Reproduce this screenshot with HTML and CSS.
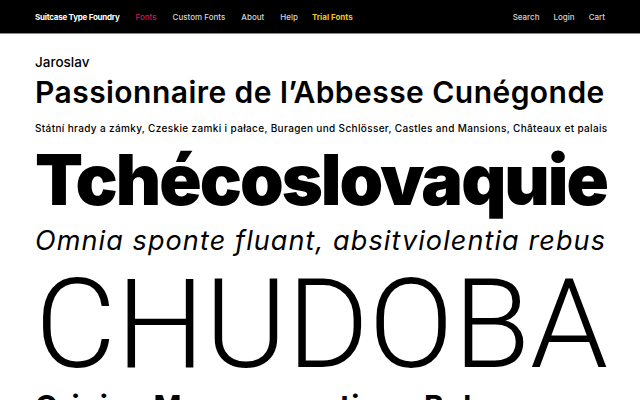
FILE: index.html
```html
<!DOCTYPE html>
<html lang="cs">
<head>
<meta charset="utf-8">
<title>Jaroslav – Suitcase Type Foundry</title>
<link rel="stylesheet" href="styles.css">
</head>
<body>
<header class="nav">
  <nav class="nav-left">
    <a class="brand" href="#">Suitcase Type Foundry</a>
    <a class="nav-link active" href="#">Fonts</a>
    <a class="nav-link" href="#">Custom Fonts</a>
    <a class="nav-link" href="#">About</a>
    <a class="nav-link" href="#">Help</a>
    <a class="nav-link trial" href="#">Trial Fonts</a>
  </nav>
  <nav class="nav-right">
    <a class="nav-link" href="#">Search</a>
    <a class="nav-link" href="#">Login</a>
    <a class="nav-link" href="#">Cart</a>
  </nav>
</header>
<main class="specimen">
  <h1 class="family">Jaroslav</h1>
  <p class="line line-semibold">Passionnaire de l’Abbesse Cunégonde</p>
  <p class="line line-small">Státní hrady a zámky, Czeskie zamki i pałace, Buragen und Schlösser, Castles and Mansions, Châteaux et palais</p>
  <p class="line line-black">Tchécoslovaquie</p>
  <p class="line line-italic">Omnia sponte fluant, absitviolentia rebus</p>
  <p class="line line-light">CHUDOBA</p>
  <p class="line line-bold">Origine Moravus, natione Bohemus</p>
</main>
</body>
</html>
```
FILE: styles.css
```css
* { box-sizing: border-box; margin: 0; padding: 0; }
html, body { background: #fff; }
body {
  font-family: Inter, "Noto Sans", sans-serif;
  color: #000;
  overflow: hidden;
  height: 400px;
}
a { text-decoration: none; color: inherit; }

.nav {
  height: 34px;
  background: #000;
  border-bottom: 1px solid #8a8a8a;
  display: flex;
  align-items: center;
  justify-content: space-between;
  padding: 0 35px;
  font-size: 8px;
}
.nav-left, .nav-right { display: flex; align-items: center; }
.nav-left { gap: 16px; }
.nav-right { gap: 14px; }
.brand { color: #fff; font-weight: 700; letter-spacing: -0.25px; }
.nav-link { color: #d4d4d4; font-weight: 500; }
.nav-link.active { color: #d4145a; }
.nav-link.trial { color: #f2c21b; font-weight: 700; margin-left: -2px; }

.specimen {
  padding: 20px 35px 0;
  display: flex;
  flex-direction: column;
}
.line { white-space: nowrap; }
.family {
  font-size: 13.5px;
  font-weight: 500;
  line-height: 16px;
}
.line-semibold {
  font-size: 30px;
  font-weight: 600;
  line-height: 34px;
  letter-spacing: 0.45px;
  margin-top: 5px;
}
.line-small {
  font-size: 10px;
  font-weight: 500;
  line-height: 14px;
  letter-spacing: 0.35px;
  margin-top: 12px;
}
.line-black {
  font-size: 70px;
  font-weight: 900;
  line-height: 70px;
  letter-spacing: -2px;
  margin-top: 10px;
}
.line-italic {
  font-size: 27px;
  font-style: italic;
  font-weight: 400;
  line-height: 30px;
  letter-spacing: 1.1px;
  margin-top: 11px;
}
.line-light {
  font-family: Roboto, Inter, sans-serif;
  font-size: 125px;
  font-weight: 300;
  line-height: 124px;
  margin-top: 7px;
}
.line-bold {
  font-size: 30px;
  font-weight: 700;
  line-height: 34px;
  letter-spacing: 0.5px;
  margin-top: 2px;
}
```
